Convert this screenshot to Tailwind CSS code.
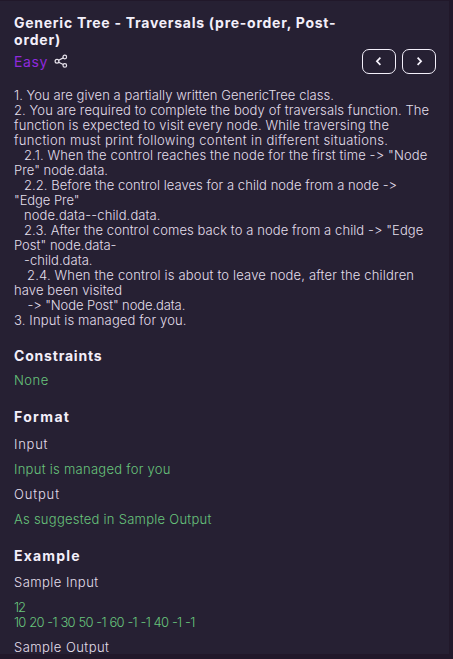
<!DOCTYPE html>
<html lang="en"><head><meta charset="utf-8"><title>Generic Tree - Traversals</title>
<script src="https://cdn.jsdelivr.net/npm/@tailwindcss/browser@4"></script></head>
<body class="h-[659px] overflow-hidden bg-[#21182a] pr-1 pt-px font-['Inter',sans-serif]">
<main class="h-[653px] overflow-hidden bg-[#262033] pl-[14px] pr-[13px] pt-[13px] text-[13px] leading-[15px] font-light text-[#e3dfeb]">
<h1 class="text-[14px] leading-[17px] font-bold text-[#f3effa] whitespace-nowrap"><div class="tracking-[0.73px]">Generic Tree - Traversals (pre-order, Post-</div><div class="tracking-[0.85px]">order)</div></h1>
<div class="flex h-[26px] items-center"><span class="text-[14px] tracking-[0.6px] leading-[17px] font-normal text-[#9029dd]">Easy</span>
<svg class="ml-[6.5px] size-[14px]" viewBox="0 0 14 14" fill="none" stroke="#e9e5ee" stroke-width="1.2"><circle cx="3" cy="7.2" r="1.9"/><circle cx="10.8" cy="3" r="1.8"/><circle cx="10.8" cy="11.4" r="1.8"/><path d="M4.7 6.2 9.2 3.9M4.7 8.2l4.5 2.3"/></svg>
<div class="ml-auto flex gap-[6px]"><button class="flex h-[25px] w-[34px] items-center justify-center rounded-[7px] border border-[#f3effa]"><svg class="size-[10px]" viewBox="0 0 10 10" fill="none" stroke="#f6f2fc" stroke-width="1.7"><path d="M6.4 1.7 2.9 5.3l3.5 3.6"/></svg></button><button class="flex h-[25px] w-[34px] items-center justify-center rounded-[7px] border border-[#f3effa]"><svg class="size-[10px]" viewBox="0 0 10 10" fill="none" stroke="#f6f2fc" stroke-width="1.7"><path d="m3.6 1.7 3.5 3.6-3.5 3.6"/></svg></button></div></div>
<section class="mt-[14px] whitespace-nowrap"><div class="tracking-[0.06px]">1. You are given a partially written GenericTree class.</div><div class="tracking-[0.1px]">2. You are required to complete the body of traversals function. The</div><div class="tracking-[0.175px]">function is expected to visit every node. While traversing the</div><div class="tracking-[0.334px]">function must print following content in different situations.</div><div class="pl-[10px] tracking-[0.13px]">2.1. When the control reaches the node for the first time -&gt; "Node</div><div class="tracking-[0.034px]">Pre" node.data.</div><div class="pl-[10px] tracking-[0.05px]">2.2. Before the control leaves for a child node from a node -&gt;</div><div class="tracking-[-0.062px]">"Edge Pre"</div><div class="pl-[10px] tracking-[0.098px]">node.data--child.data.</div><div class="pl-[10px] tracking-[0.085px]">2.3. After the control comes back to a node from a child -&gt; "Edge</div><div class="tracking-[0.027px]">Post" node.data-</div><div class="pl-[10px] tracking-[0.035px]">-child.data.</div><div class="pl-[13px] tracking-[0.171px]">2.4. When the control is about to leave node, after the children</div><div class="tracking-[0.119px]">have been visited</div><div class="pl-[13.5px] tracking-[-0.1px]">-&gt; "Node Post" node.data.</div><div class="tracking-[0.14px]">3. Input is managed for you.</div></section>
<section class="mt-[19px]">
<h2 class="text-[14px] leading-[17px] font-bold text-[#f3effa] tracking-[0.8px]">Constraints</h2>
<p class="mt-[9px] text-[#68c47c] tracking-[0.5px]">None</p>
</section>
<section class="mt-5">
<h2 class="text-[14px] leading-[17px] font-bold text-[#f3effa] tracking-[1.35px]">Format</h2>
<p class="mt-3 tracking-[0.77px]">Input</p>
<p class="mt-[10px] text-[#68c47c] tracking-[0.277px]">Input is managed for you</p>
<p class="mt-[10px] tracking-[0.85px]">Output</p>
<p class="mt-[10px] text-[#68c47c] tracking-[0.26px]">As suggested in Sample Output</p>
</section>
<section class="mt-5">
<h2 class="text-[14px] leading-[17px] font-bold text-[#f3effa] tracking-[1.2px]">Example</h2>
<p class="mt-[11px] tracking-[0.45px]">Sample Input</p>
<p class="mt-[10px] text-[#68c47c]"><span class="tracking-[-1px]">12</span><br><span class="tracking-[-0.75px] [word-spacing:0.7px]">10 20 -1 30 50 -1 60 -1 -1 40 -1 -1</span></p>
<p class="mt-[10px] tracking-[0.45px]">Sample Output</p>
</section>
</main>
</body></html>
